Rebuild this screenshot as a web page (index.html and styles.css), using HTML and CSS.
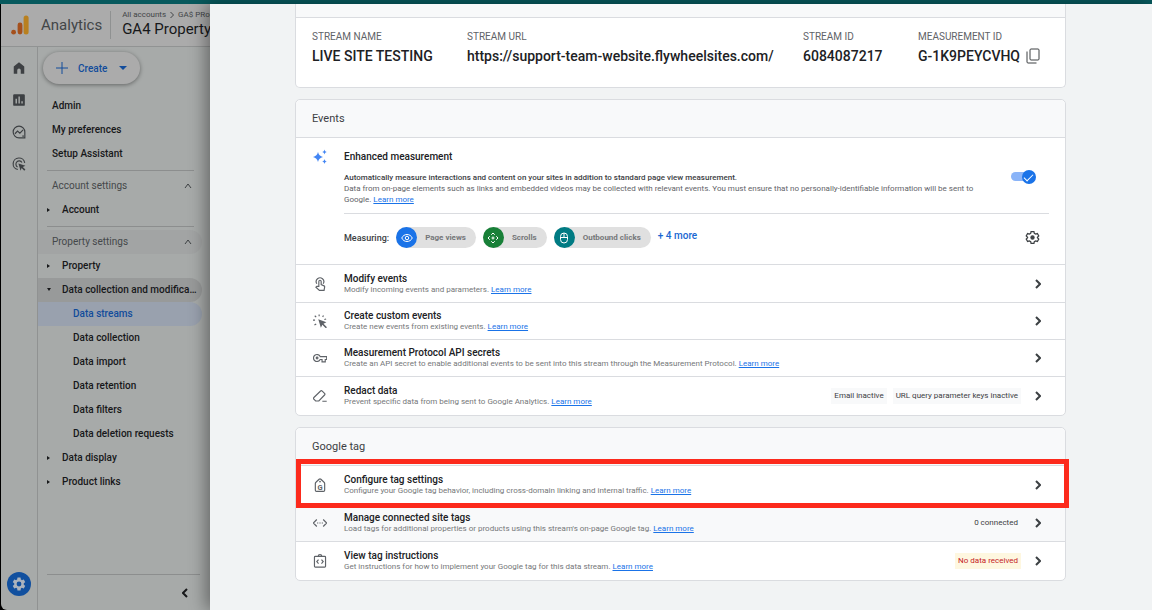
FILE: index.html
```html
<!DOCTYPE html>
<html lang="en">
<head>
    <meta charset="UTF-8">
    <title>Analytics | Data streams</title>
    <link rel="stylesheet" href="styles.css">
</head>
<body>
    <div class="topbar"></div>
    <div class="layout">
        <!-- Dimmed app behind the panel -->
        <div class="app">
            <header class="app-header">
                <svg class="logo" viewBox="0 0 18 20">
                    <circle cx="2.6" cy="17.2" r="2.4" fill="#a5501c" />
                    <rect x="6.6" y="7.5" width="4.8" height="12" rx="2.4" fill="#a5501c" />
                    <rect x="12.6" y="0.5" width="5" height="19" rx="2.5" fill="#b9801f" />
                </svg>
                <span class="brand">Analytics</span>
                <div class="property">
                    <div class="crumbs">All accounts <svg viewBox="0 0 6 8"><path d="M1.5 1l3 3-3 3" /></svg> GA$ PRoperty</div>
                    <div class="property-name">GA4 Property</div>
                </div>
            </header>
            <div class="app-body">
                <nav class="rail">
                    <a href="#" aria-label="Home"><svg viewBox="0 0 24 24"><path d="M3 22V9.500l9-7.500 9 7.500V22h-6v-6a3 3 0 0 0-6 0v6z" /></svg></a>
                    <a href="#" aria-label="Reports"><svg viewBox="0 0 24 24"><path fill-rule="evenodd" d="M4 2h16a2 2 0 0 1 2 2v16a2 2 0 0 1-2 2H4a2 2 0 0 1-2-2V4a2 2 0 0 1 2-2zm2 8v8h2.500v-8zm5-4v12h2.500V6zm5 8v4h2.500v-4z" /></svg></a>
                    <a href="#" aria-label="Explore"><svg viewBox="0 0 24 24" class="line"><path d="M22 12v10H12A10 10 0 1 1 22 12z" /><path d="M5 15l4.500-4.500 4 3.500L19 8.500" /><path d="M19 17.500v3" /></svg></a>
                    <a href="#" aria-label="Advertising"><svg viewBox="0 0 24 24"><path class="ring" d="M10 21.500A10 10 0 1 1 21.800 10M9.500 17A5.500 5.500 0 1 1 17 9.500" /><path d="M11 11l12 4-4.500 2 4.500 4.500-2 2-4.500-4.500-1.800 4.500z" /></svg></a>
                    <a href="#" class="gear" aria-label="Admin"><svg viewBox="0 0 24 24"><path d="M19.140 12.940c.04-.3.060-.61.060-.94 0-.32-.02-.64-.07-.94l2.030-1.580a.49.49 0 0 0 .12-.61l-1.920-3.320a.49.49 0 0 0-.59-.22l-2.390.96c-.5-.38-1.030-.7-1.620-.94l-.36-2.540a.48.48 0 0 0-.48-.41h-3.840a.47.47 0 0 0-.47.41l-.36 2.540c-.59.24-1.130.57-1.620.94l-2.390-.96a.48.48 0 0 0-.59.22L2.740 8.870c-.12.21-.08.47.12.61l2.030 1.580c-.05.3-.09.63-.09.94s.02.64.07.94l-2.030 1.580a.49.49 0 0 0-.12.61l1.920 3.320c.12.22.37.29.59.22l2.390-.96c.5.38 1.030.7 1.620.94l.36 2.540c.05.24.24.41.48.41h3.840c.24 0 .44-.17.47-.41l.36-2.540c.59-.24 1.130-.56 1.620-.94l2.390.96c.22.08.47 0 .59-.22l1.920-3.320a.47.47 0 0 0-.12-.61zM12 15.600a3.600 3.600 0 1 1 0-7.200 3.600 3.600 0 0 1 0 7.200z" /></svg></a>
                </nav>
                <nav class="menu">
                    <button type="button" class="create">
                        <svg class="plus" viewBox="0 0 12 12"><path d="M6 0v12M0 6h12" /></svg>
                        Create
                        <svg class="caret" viewBox="0 0 8 4"><path d="M0 0h8L4 4z" /></svg>
                    </button>
                    <a href="#" class="item">Admin</a>
                    <a href="#" class="item">My preferences</a>
                    <a href="#" class="item">Setup Assistant</a>
                    <hr />
                    <button type="button" class="item group">Account settings <svg viewBox="0 0 8 6"><path d="M1 5l3-4 3 4" /></svg></button>
                    <a href="#" class="item parent">Account</a>
                    <hr />
                    <button type="button" class="item group shaded">Property settings <svg viewBox="0 0 8 6"><path d="M1 5l3-4 3 4" /></svg></button>
                    <a href="#" class="item parent">Property</a>
                    <a href="#" class="item parent open">Data collection and modification</a>
                    <a href="#" class="item child active">Data streams</a>
                    <a href="#" class="item child">Data collection</a>
                    <a href="#" class="item child">Data import</a>
                    <a href="#" class="item child">Data retention</a>
                    <a href="#" class="item child">Data filters</a>
                    <a href="#" class="item child">Data deletion requests</a>
                    <a href="#" class="item parent">Data display</a>
                    <a href="#" class="item parent">Product links</a>
                    <div class="collapse">
                        <button type="button" aria-label="Collapse menu"><svg viewBox="0 0 6 10"><path d="M5 1L1 5l4 4" /></svg></button>
                    </div>
                </nav>
            </div>
        </div>

        <!-- Stream details panel -->
        <main class="panel">
            <section class="card details">
                <div class="strip"></div>
                <div class="fields">
                    <div><div class="label">STREAM NAME</div><div class="value">LIVE SITE TESTING</div></div>
                    <div><div class="label">STREAM URL</div><div class="value">https://support-team-website.flywheelsites.com/</div></div>
                    <div><div class="label">STREAM ID</div><div class="value">6084087217</div></div>
                    <div>
                        <div class="label">MEASUREMENT ID</div>
                        <div class="value">G-1K9PEYCVHQ
                            <button type="button" class="copy" aria-label="Copy"><svg viewBox="0 0 14 16"><rect x="4" y="1" width="9" height="11" rx="1" /><path d="M1 3.500V14a1 1 0 0 0 1 1h8.500" /></svg></button>
                        </div>
                    </div>
                </div>
            </section>

            <section class="card">
                <h2>Events</h2>
                <div class="enhanced">
                    <svg class="icon spark" viewBox="0 0 16 16"><path d="M6 3c.8 3 2 4.200 5 5-3 .8-4.200 2-5 5-.8-3-2-4.200-5-5 3-.8 4.200-2 5-5z" /><path d="M12.500.5c.4 1.600.9 2.100 2.500 2.500-1.600.4-2.100.9-2.500 2.500-.4-1.600-.9-2.100-2.500-2.500 1.600-.4 2.100-.9 2.500-2.500z" /><path d="M12.500 10c.4 1.600.9 2.100 2.500 2.500-1.600.4-2.100.9-2.500 2.500-.4-1.600-.9-2.100-2.500-2.500 1.600-.4 2.100-.9 2.500-2.500z" /></svg>
                    <div class="enhanced-body">
                        <h3>Enhanced measurement</h3>
                        <div class="about">
                            <p><b>Automatically measure interactions and content on your sites in addition to standard page view measurement.</b><br />
                            Data from on-page elements such as links and embedded videos may be collected with relevant events. You must ensure that no personally-identifiable information will be sent to Google. <a href="#">Learn more</a></p>
                            <input type="checkbox" class="toggle" aria-label="Enhanced measurement" checked />
                        </div>
                        <div class="measuring">
                            <span class="measuring-label">Measuring:</span>
                            <span class="chip"><i class="dot blue"><svg viewBox="0 0 24 24"><path d="M1.500 12C3.500 7.500 7.500 5 12 5s8.500 2.500 10.500 7c-2 4.500-6 7-10.500 7s-8.500-2.500-10.500-7z" /><circle cx="12" cy="12" r="3.500" /></svg></i>Page views</span>
                            <span class="chip"><i class="dot green"><svg viewBox="0 0 24 24"><path d="M8.500 5.500L12 2l3.500 3.500M18.500 8.500L22 12l-3.500 3.500M15.500 18.500L12 22l-3.500-3.500M5.500 15.500L2 12l3.500-3.500" /><circle cx="12" cy="12" r="2" /></svg></i>Scrolls</span>
                            <span class="chip"><i class="dot teal"><svg viewBox="0 0 24 24"><rect x="5" y="2" width="14" height="20" rx="7" /><path d="M5 11h14M12 2v9" /></svg></i>Outbound clicks</span>
                            <a href="#" class="more">+ 4 more</a>
                            <button type="button" class="settings" aria-label="Settings"><svg viewBox="0 0 24 24"><path d="M9.700 2.500h4.600l.6 2.900 2.100 1.200 2.800-.9 2.200 3.900-2.100 2 v.8l2.100 2-2.200 3.900-2.800-.9-2.100 1.200-.6 2.900H9.700l-.6-2.900L7 17.400l-2.800.9L2 14.400l2.100-2v-.8L2 9.600l2.200-3.900 2.800.9 2.100-1.200z" /><circle cx="12" cy="12" r="2.500" /></svg></button>
                        </div>
                    </div>
                </div>
                <div class="row">
                    <svg class="icon" viewBox="0 0 24 24"><path d="M6.500 11.500a6.500 6.500 0 1 1 11 0" /><path d="M10 16V7.500a2 2 0 0 1 4 0V13l5 2.200c.8.4 1.200 1 1 1.900L19 23h-8l-6-5.500 1.500-1.500z" /></svg>
                    <div class="text"><h3>Modify events</h3><p>Modify incoming events and parameters. <a href="#">Learn more</a></p></div>
                    <button type="button" class="go" aria-label="Open"><svg viewBox="0 0 6 10"><path d="M1 1l4 4-4 4" /></svg></button>
                </div>
                <div class="row compact">
                    <svg class="icon" viewBox="0 0 24 24"><path class="fill" d="M9 9l14 5-5 2.500 6 6-2 2-6-6-2.500 5z" /><path d="M0 10.500h3.500M2.500 19l3-2M3 3l2.500 2.500M10.500 1v3M18 2.500L16.500 5M22.500 8.500l-3 1" /></svg>
                    <div class="text"><h3>Create custom events</h3><p>Create new events from existing events. <a href="#">Learn more</a></p></div>
                    <button type="button" class="go" aria-label="Open"><svg viewBox="0 0 6 10"><path d="M1 1l4 4-4 4" /></svg></button>
                </div>
                <div class="row compact">
                    <svg class="icon" viewBox="0 0 24 24"><path d="M12.300 9.500H23.500v5h-2.500v4H15.500v-4h-3.200a6 6 0 1 1 0-5z" /><circle cx="7" cy="12" r="1.500" /></svg>
                    <div class="text"><h3>Measurement Protocol API secrets</h3><p>Create an API secret to enable additional events to be sent into this stream through the Measurement Protocol. <a href="#">Learn more</a></p></div>
                    <button type="button" class="go" aria-label="Open"><svg viewBox="0 0 6 10"><path d="M1 1l4 4-4 4" /></svg></button>
                </div>
                <div class="row">
                    <svg class="icon" viewBox="0 0 24 24"><path d="M1.500 14.500L13 3.500a2 2 0 0 1 2.800 0l4 4a2 2 0 0 1 0 2.800L10 20.500H4.500l-3-3a2 2 0 0 1 0-3zM16 21h7.500" /></svg>
                    <div class="text"><h3>Redact data</h3><p>Prevent specific data from being sent to Google Analytics. <a href="#">Learn more</a></p></div>
                    <span class="tag">Email inactive</span>
                    <span class="tag">URL query parameter keys inactive</span>
                    <button type="button" class="go" aria-label="Open"><svg viewBox="0 0 6 10"><path d="M1 1l4 4-4 4" /></svg></button>
                </div>
            </section>

            <section class="card">
                <h2>Google tag</h2>
                <div class="row highlight">
                    <svg class="icon" viewBox="0 0 24 24"><path d="M6 23a2 2 0 0 1-2-2V9.500a3 3 0 0 1 1-2.200l5.500-5.200a2.200 2.200 0 0 1 3 0L19 7.300a3 3 0 0 1 1 2.200V21a2 2 0 0 1-2 2z" /><circle class="fill" cx="12" cy="6" r="1.500" /><text x="12" y="20" text-anchor="middle">G</text></svg>
                    <div class="text"><h3>Configure tag settings</h3><p>Configure your Google tag behavior, including cross-domain linking and internal traffic. <a href="#">Learn more</a></p></div>
                    <button type="button" class="go" aria-label="Open"><svg viewBox="0 0 6 10"><path d="M1 1l4 4-4 4" /></svg></button>
                </div>
                <div class="row hovered">
                    <svg class="icon" viewBox="0 0 24 24"><path d="M6.500 6l-6 6 6 6M17.500 6l6 6-6 6" /><path class="fill" d="M7 11h2v2H7zM11 11h2v2h-2zM15 11h2v2h-2z" /></svg>
                    <div class="text"><h3>Manage connected site tags</h3><p>Load tags for additional properties or products using this stream's on-page Google tag. <a href="#">Learn more</a></p></div>
                    <span class="tag plain">0 connected</span>
                    <button type="button" class="go" aria-label="Open"><svg viewBox="0 0 6 10"><path d="M1 1l4 4-4 4" /></svg></button>
                </div>
                <div class="row">
                    <svg class="icon" viewBox="0 0 24 24"><rect x="2.500" y="4" width="19" height="18.500" rx="1.500" /><path d="M9.500 9.500L6.500 13l3 3.500M14.500 9.500l3 3.500-3 3.500" /><path d="M9 4a3 3 0 0 1 6 0" /></svg>
                    <div class="text"><h3>View tag instructions</h3><p>Get instructions for how to implement your Google tag for this data stream. <a href="#">Learn more</a></p></div>
                    <span class="tag warn">No data received</span>
                    <button type="button" class="go" aria-label="Open"><svg viewBox="0 0 6 10"><path d="M1 1l4 4-4 4" /></svg></button>
                </div>
            </section>
        </main>
    </div>
</body>
</html>
```
FILE: styles.css
```css
* {
    box-sizing: border-box;
}

body {
    margin: 0;
    min-height: 100vh;
    display: flex;
    flex-direction: column;
    background: #000;
    font-family: Roboto, "Liberation Sans", sans-serif;
    font-size: 10px;
    color: #202124;
}

h2, h3, p {
    margin: 0;
}

button {
    padding: 0;
    border: none;
    background: none;
    font: inherit;
    color: inherit;
    cursor: pointer;
}

a {
    color: #1a73e8;
}

svg {
    display: block;
    flex: none;
}

.topbar {
    height: 4px;
    background: #07595d;
}

.layout {
    flex: 1;
    display: flex;
}

/* App */
.app {
    width: 210px;
    padding-left: 1px;
    display: flex;
    flex-direction: column;
    overflow: hidden;
}

.app-header {
    height: 43px;
    padding-left: 10px;
    display: flex;
    align-items: center;
    background: #ababab;
    border-bottom: 1px solid #919393;
    white-space: nowrap;
}

.logo {
    width: 18px;
    height: 20px;
}

.brand {
    margin-left: 12px;
    font-size: 15px;
    color: #424547;
}

.property {
    margin-left: 8px;
    padding-left: 11px;
    border-left: 1px solid #8f9191;
}

.crumbs {
    display: flex;
    align-items: center;
    gap: 3px;
    font-size: 8px;
    line-height: 8px;
    color: #424547;
}

.crumbs svg {
    width: 6px;
    height: 8px;
    fill: none;
    stroke: #424547;
}

.property-name {
    font-size: 15px;
    line-height: 20px;
    color: #17181a;
}

.app-body {
    flex: 1;
    display: flex;
    background: #a7aaa9;
    border-bottom-left-radius: 6px;
}

.rail {
    width: 37px;
    padding: 14px 0 14px;
    display: flex;
    flex-direction: column;
    align-items: center;
    gap: 18px;
    border-right: 1px solid #909292;
}

.rail svg {
    width: 14px;
    height: 14px;
    fill: #3d4043;
}

.rail .line, .rail .ring {
    fill: none;
    stroke: #3d4043;
    stroke-width: 2;
}

.rail .gear {
    width: 24px;
    height: 24px;
    margin-top: auto;
    display: grid;
    place-items: center;
    border-radius: 50%;
    background: #11509f;
}

.rail .gear svg {
    width: 16px;
    height: 16px;
    fill: #abb3bd;
}

.menu {
    flex: 1;
    padding: 5px 8px 0 0;
    display: flex;
    flex-direction: column;
}

.create {
    height: 32px;
    margin: 0 0 10px 5px;
    padding: 0 13px;
    display: flex;
    align-items: center;
    align-self: flex-start;
    gap: 10px;
    border-radius: 16px;
    background: #ababab;
    box-shadow: 0 1px 4px rgba(0, 0, 0, 0.4);
    font-weight: 500;
    color: #124c9b;
}

.plus {
    width: 12px;
    height: 12px;
    stroke: #124c9b;
}

.caret {
    width: 8px;
    height: 4px;
    margin-left: 2px;
    fill: #124c9b;
}

.item {
    height: 24px;
    width: 164px;
    padding: 0 5px 0 14px;
    line-height: 24px;
    text-align: left;
    text-decoration: none;
    font-weight: 500;
    color: #17181a;
    border-radius: 0 12px 12px 0;
    white-space: nowrap;
    overflow: hidden;
    text-overflow: ellipsis;
}

.menu hr {
    width: 147px;
    height: 1px;
    margin: 4px 0 3px 9px;
    border: none;
    background: #8c8e8e;
}

.group {
    display: flex;
    align-items: center;
    justify-content: space-between;
    padding-right: 10px;
    font-weight: 400;
    color: #45484a;
}

.group svg {
    width: 8px;
    height: 6px;
    fill: none;
    stroke: #3d4043;
}

.shaded {
    background: #a2a4a4;
}

.parent::before {
    content: "";
    display: inline-block;
    width: 0;
    height: 0;
    margin: 0 12px 1px -5px;
    vertical-align: middle;
    border-left: 3px solid #17181a;
    border-top: 2px solid transparent;
    border-bottom: 2px solid transparent;
}

.open {
    background: #989a9a;
}

.open::before {
    margin-right: 11px;
    border-top: 3px solid #17181a;
    border-left: 2px solid transparent;
    border-right: 2px solid transparent;
    border-bottom: 0;
}

.child {
    padding-left: 35px;
}

.active {
    background: #99a1ae;
    color: #124c9b;
}

.collapse {
    height: 36px;
    margin: auto 2px 0 9px;
    padding-right: 12px;
    display: flex;
    align-items: center;
    justify-content: flex-end;
    border-top: 1px solid #8c8e8e;
}

.collapse svg {
    width: 6px;
    height: 10px;
    fill: none;
    stroke: #17181a;
    stroke-width: 2;
}

/* Panel */
.panel {
    flex: 1;
    position: relative;
    padding: 0 86px 16px 85px;
    background: #f1f3f4;
    box-shadow: -4px 0 16px rgba(0, 0, 0, 0.4);
}

.card {
    margin-bottom: 11px;
    background: #fff;
    border: 1px solid #dadce0;
    border-radius: 5px;
}

.details {
    border-top: none;
    border-radius: 0 0 5px 5px;
}

.strip {
    height: 14px;
    background: #f8f9fa;
    border-bottom: 1px solid #dadce0;
}

.fields {
    height: 69px;
    padding: 13px 16px 0;
    display: grid;
    grid-template-columns: 155px 336px 115px auto;
    white-space: nowrap;
}

.label {
    line-height: 12px;
    color: #5f6368;
}

.value {
    margin-top: 3px;
    display: flex;
    align-items: center;
    gap: 6px;
    font-size: 14px;
    line-height: 20px;
    font-weight: 500;
}

.copy svg {
    width: 14px;
    height: 16px;
    fill: none;
    stroke: #3c4043;
}

h2 {
    height: 37px;
    padding: 0 16px;
    line-height: 37px;
    font-size: 11px;
    font-weight: 400;
    color: #3c4043;
    background: #f8f9fa;
    border-radius: 5px 5px 0 0;
}

h3 {
    font-size: 10px;
    line-height: 11px;
    font-weight: 500;
}

p {
    font-size: 8px;
    line-height: 11px;
    color: #757779;
}

.icon {
    width: 16px;
    height: 16px;
    padding: 1px;
    fill: none;
    stroke: #5f6368;
    stroke-width: 2;
}

.icon .fill {
    fill: #5f6368;
    stroke: none;
}

.icon text {
    font-size: 13px;
    font-weight: 700;
    fill: #5f6368;
    stroke: none;
}

.enhanced, .row {
    padding: 0 16px;
    display: flex;
    gap: 16px;
    border-top: 1px solid #dadce0;
}

.enhanced {
    height: 127px;
    padding-top: 11px;
}

.icon.spark {
    padding: 0;
    fill: #4285f4;
    stroke: none;
}

.enhanced-body {
    flex: 1;
}

.enhanced h3 {
    margin: 2px 0 10px;
}

.about {
    height: 41px;
    display: flex;
    justify-content: space-between;
}

.about p {
    max-width: 650px;
    color: #5f6368;
}

.about b {
    font-weight: 500;
    color: #3c4043;
}

/* Switch with a check mark on the knob */
.toggle {
    appearance: none;
    position: relative;
    width: 24px;
    height: 9px;
    margin: 0 14px 0 0;
    border-radius: 5px;
    background: #8ab4f8;
}

.toggle::before {
    content: "";
    position: absolute;
    top: -2px;
    right: -1px;
    width: 14px;
    height: 14px;
    border-radius: 50%;
    background: #1a73e8;
}

.toggle::after {
    content: "";
    position: absolute;
    top: 0;
    right: 4px;
    width: 4px;
    height: 8px;
    border: solid #fff;
    border-width: 0 1px 1px 0;
    transform: rotate(45deg);
}

.measuring {
    height: 48px;
    display: flex;
    align-items: center;
    gap: 7px;
    border-top: 1px solid #dadce0;
}

.measuring-label {
    font-size: 9px;
    font-weight: 500;
    color: #3c4043;
}

.chip {
    height: 21px;
    padding-right: 10px;
    display: flex;
    align-items: center;
    gap: 8px;
    border-radius: 11px;
    background: #e0e0e0;
    font-size: 8px;
    font-weight: 700;
    color: #757779;
}

.dot {
    width: 21px;
    height: 21px;
    display: grid;
    place-items: center;
    border-radius: 50%;
}

.dot svg {
    width: 12px;
    height: 12px;
    fill: none;
    stroke: #fff;
    stroke-width: 2;
}

.blue {
    background: #1a73e8;
}

.green {
    background: #188038;
}

.teal {
    background: #007b83;
}

.more {
    padding-bottom: 4px;
    font-weight: 500;
    text-decoration: none;
    color: #1967d2;
}

.settings {
    margin: 0 9px 0 auto;
}

.settings svg {
    width: 15px;
    height: 15px;
    fill: none;
    stroke: #3c4043;
    stroke-width: 2;
}

.settings circle {
    fill: #3c4043;
}

.row {
    min-height: 38px;
    align-items: center;
}

.row.compact {
    min-height: 37px;
}

.row:last-child {
    min-height: 39px;
    border-radius: 0 0 5px 5px;
}

.text {
    flex: 1;
}

.tag {
    margin-right: -10px;
    padding: 0 3px;
    font-size: 8px;
    line-height: 16px;
    background: #f8f9fa;
    color: #3c4043;
}

.plain {
    background: none;
}

.warn {
    background: #fef7e0;
    color: #c5221f;
}

.go {
    padding: 4px 8px;
}

.go svg {
    width: 6px;
    height: 10px;
    fill: none;
    stroke: #3c4043;
    stroke-width: 2;
}

.hovered {
    background: #f8f9fa;
}

/* Red frame around the row to click */
.highlight {
    position: relative;
}

.highlight::after {
    content: "";
    position: absolute;
    inset: -7px -4px -5px 0;
    border: 5px solid #fc2a1c;
    z-index: 1;
    pointer-events: none;
}
```
